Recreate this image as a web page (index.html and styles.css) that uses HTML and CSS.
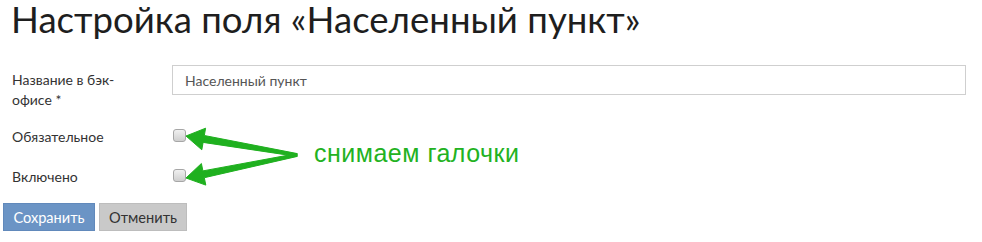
FILE: index.html
```html
<!DOCTYPE html>
<html lang="ru">
<head>
<meta charset="utf-8">
<link rel="stylesheet" href="styles.css">
</head>
<body>
<div class="page">
  <h1 class="title">Настройка поля «Населенный пункт»</h1>
  <form class="form">
    <div class="row row-name">
      <label class="label">Название в бэк-<br>офисе *</label>
      <input class="text-input" type="text" value="Населенный пункт">
    </div>
    <div class="row row-check">
      <label class="label">Обязательное</label>
      <div><input class="check" type="checkbox"></div>
    </div>
    <div class="row row-check row-last">
      <label class="label">Включено</label>
      <div><input class="check" type="checkbox"></div>
    </div>
    <div class="actions">
      <button type="button" class="btn btn-save">Сохранить</button>
      <button type="button" class="btn btn-cancel">Отменить</button>
    </div>
  </form>
  <svg class="arrows" width="982" height="242" viewBox="0 0 982 242">
    <polygon points="297.3,153.6 204.3,135.5 205.6,128.2 186,136 201.8,149.8 203.1,142.4 296.7,156.4"/>
    <polygon points="296.7,153.6 202.9,170.9 201.4,163.5 186,178 205.8,185.1 204.3,177.7 297.3,156.4"/>
  </svg>
  <div class="note">снимаем галочки</div>
</div>
</body>
</html>
```
FILE: styles.css
```css
html, body {
  margin: 0;
  padding: 0;
  background: #fff;
}
.page {
  position: relative;
  width: 982px;
  height: 242px;
  font-family: Lato, "Open Sans", "Noto Sans", sans-serif;
  color: #333;
}
.title {
  margin: 0;
  padding: 0 0 0 11px;
  font-size: 36.6px;
  line-height: 38px;
  font-weight: 400;
  color: #1e1e1e;
}
.form {
  margin: 27px 0 0;
}
.row {
  display: grid;
  grid-template-columns: 160px 1fr;
  padding: 0 16px 0 12px;
}
.label {
  font-size: 14px;
  line-height: 20px;
  color: #333;
}
.row-name .label {
  padding-top: 5px;
}
.row-name {
  height: 45px;
}
.row-check {
  margin-top: 17px;
  height: 20px;
}
.row-last {
  margin-top: 20px;
}
.text-input {
  box-sizing: border-box;
  width: 100%;
  height: 30px;
  margin: 0;
  padding: 0 12px;
  border: 1px solid #cfcfcf;
  border-radius: 0;
  font-family: Lato, "Open Sans", sans-serif;
  font-size: 14px;
  color: #555;
  outline: none;
}
.check {
  -webkit-appearance: none;
  appearance: none;
  display: block;
  box-sizing: border-box;
  width: 13px;
  height: 13px;
  margin: 2px 0 0 1px;
  border: 1px solid #a6a6a6;
  border-radius: 3px;
  background: linear-gradient(#f0f0f0, #cfcfcf);
}
.actions {
  display: flex;
  gap: 4px;
  margin-top: 16px;
  padding-left: 3px;
}
.btn {
  box-sizing: border-box;
  height: 28px;
  margin: 0;
  padding: 0;
  border: 1px solid transparent;
  border-radius: 0;
  font-family: Lato, "Open Sans", sans-serif;
  font-size: 14.6px;
  cursor: pointer;
}
.btn-save {
  width: 92px;
  background: #6b94c5;
  border-color: #6189bb;
  color: #fff;
}
.btn-cancel {
  width: 88px;
  background: #c9c9c9;
  border-color: #bdbdbd;
  color: #333;
}
.arrows {
  position: absolute;
  left: 0;
  top: 0;
  pointer-events: none;
}
.arrows polygon {
  fill: #1fb01f;
  stroke: #1fb01f;
  stroke-width: 1;
  stroke-linejoin: round;
}
.note {
  position: absolute;
  left: 314px;
  top: 141px;
  font-family: "Liberation Sans", Arial, sans-serif;
  font-size: 25px;
  line-height: 25px;
  letter-spacing: 0.5px;
  color: #22b222;
}
```
